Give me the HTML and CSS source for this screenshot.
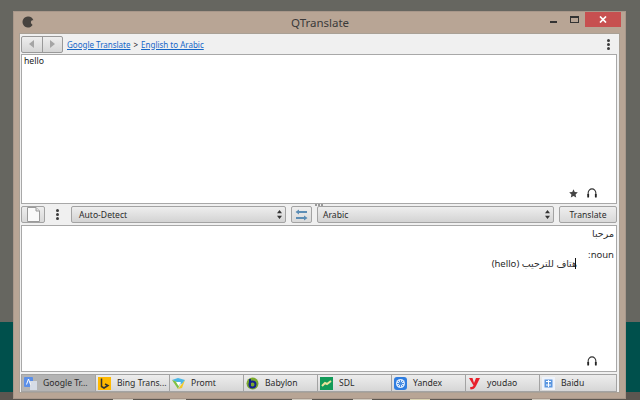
FILE: index.html
```html
<!DOCTYPE html>
<html lang="en">
<head>
<meta charset="utf-8">
<title>QTranslate</title>
<link rel="stylesheet" href="styles.css">
</head>
<body>
<div class="desktop">
  <div class="band-grey"></div>
  <div class="band-teal"></div>
  <div class="band-bottom"><i class="chip c1"></i><i class="chip c2"></i><i class="chip c3"></i><i class="chip c4"></i><i class="chip c5"></i><i class="chip c6"></i></div>
  <div class="window">
    <header class="titlebar">
      <svg class="appicon" width="12" height="12" viewBox="0 0 12 12"><path d="M6 .5a5.5 5.5 0 1 0 4.6 8.5C9.500 8 8.500 7 9 5.500c.4-1 1.300-1.400 2.400-1.200A5.500 5.500 0 0 0 6 .5z" fill="#46423e"/></svg>
      <span class="title">QTranslate</span>
      <div class="winbtns">
        <i class="min"></i>
        <i class="max"></i>
        <span class="close"><svg width="8" height="7" viewBox="0 0 8 7"><path d="M1 .5l6 6M7 .5l-6 6" stroke="#fff" stroke-width="1.700"/></svg></span>
      </div>
    </header>
    <main class="client">
      <div class="toolbar">
        <div class="navgroup">
          <button class="nav"><svg width="6" height="8" viewBox="0 0 6 8"><path d="M5 0v8L0 4z" fill="#a5a5a5"/></svg></button>
          <button class="nav"><svg width="6" height="8" viewBox="0 0 6 8"><path d="M1 0v8l5-4z" fill="#a5a5a5"/></svg></button>
        </div>
        <a class="link">Google Translate</a><span class="sep">&gt;</span><a class="link">English to Arabic</a>
        <span class="dots right"><i></i><i></i><i></i></span>
      </div>
      <section class="box source">
        <p class="src-text">hello</p>
        <div class="box-icons">
          <svg width="9" height="9" viewBox="0 0 10 10"><path d="M5 .2l1.400 3.100 3.400.4-2.500 2.300.7 3.400L5 7.700 2 9.400l.7-3.400L.2 3.700l3.400-.4z" fill="#454545"/></svg>
          <svg class="phones" width="12" height="10" viewBox="0 0 12 11"><path d="M1.800 8V5.200a4.200 4.200 0 0 1 8.400 0V8" fill="none" stroke="#333" stroke-width="1.200"/><rect x=".8" y="6.500" width="2" height="4" rx=".6" fill="#222"/><rect x="9.200" y="6.500" width="2" height="4" rx=".6" fill="#222"/></svg>
        </div>
      </section>
      <div class="splitter"><i></i><i></i><i></i></div>
      <div class="controls">
        <button class="btn doc"><svg width="13" height="15" viewBox="0 0 13 15"><path d="M.5.500h8.500l3.500 3.500v10.500H.500z" fill="#fafafa" stroke="#9a9a9a"/><path d="M9 .5V4h3.500" fill="#e4e4e4" stroke="#9a9a9a"/></svg></button>
        <span class="dots mid"><i></i><i></i><i></i></span>
        <div class="combo from"><span>Auto-Detect</span><svg width="5" height="9" viewBox="0 0 5 9"><path d="M2.500 0L5 3.200H0zM2.500 9L0 5.800h5z" fill="#333"/></svg></div>
        <button class="btn swap"><svg width="13" height="12" viewBox="0 0 13 12"><path d="M4 .5L.5 3 4 5.500V4h8V2H4zM9 6.500L12.500 9 9 11.500V10H1V8h8z" fill="#5c8db5"/></svg></button>
        <div class="combo to"><span>Arabic</span><svg width="5" height="9" viewBox="0 0 5 9"><path d="M2.500 0L5 3.200H0zM2.500 9L0 5.800h5z" fill="#333"/></svg></div>
        <button class="btn translate">Translate</button>
      </div>
      <section class="box result">
        <div class="rtl" dir="rtl">
          <p>مرحبا</p>
          <p class="pos">noun:</p>
          <p class="def"><span class="caret"></span>هتاف للترحيب (hello)</p>
        </div>
        <div class="box-icons">
          <svg class="phones" width="12" height="10" viewBox="0 0 12 11"><path d="M1.800 8V5.200a4.200 4.200 0 0 1 8.400 0V8" fill="none" stroke="#333" stroke-width="1.200"/><rect x=".8" y="6.500" width="2" height="4" rx=".6" fill="#222"/><rect x="9.200" y="6.500" width="2" height="4" rx=".6" fill="#222"/></svg>
        </div>
      </section>
      <nav class="tabs">
        <div class="tab active"><svg width="13" height="13" viewBox="0 0 13 13"><rect width="9" height="10" rx="1" fill="#5b8fe8"/><rect x="6" y="4" width="7" height="9" fill="#d6dce6"/><path d="M2.500 7.500L4.500 2l2 5.500" fill="none" stroke="#fff"/></svg><span>Google Tr...</span></div>
        <div class="tab"><svg width="13" height="13" viewBox="0 0 13 13"><rect width="13" height="13" fill="#ffb900"/><path d="M3.500 1.500v8l2.500 1.500 4-2.500-3-1.500" fill="none" stroke="#333" stroke-width="1.500"/></svg><span>Bing Trans...</span></div>
        <div class="tab"><svg width="13" height="13" viewBox="0 0 13 13"><path d="M0 3l6-2 7 2-3 4z" fill="#49b6e6"/><path d="M0 3l6 9 2-6z" fill="#7fc241"/><path d="M13 3l-7 9 4-1z" fill="#f2c927"/><path d="M4 5h5L6.500 9z" fill="#fff"/></svg><span>Promt</span></div>
        <div class="tab"><svg width="13" height="13" viewBox="0 0 13 13"><circle cx="6.500" cy="6.500" r="6" fill="#7aa82e"/><circle cx="6.500" cy="7.500" r="3" fill="none" stroke="#14238c" stroke-width="2"/><path d="M4 2v7.500" stroke="#14238c" stroke-width="2"/></svg><span>Babylon</span></div>
        <div class="tab"><svg width="13" height="13" viewBox="0 0 13 13"><rect width="13" height="13" fill="#129a58"/><path d="M2 9l3-3 2 1 4-3" fill="none" stroke="#e9e29b" stroke-width="2"/></svg><span>SDL</span></div>
        <div class="tab"><svg width="13" height="13" viewBox="0 0 13 13"><rect width="13" height="13" rx="3" fill="#2f7de0"/><circle cx="6.500" cy="6.500" r="4.500" fill="#dbe9fa"/><path d="M3 6.500h7M6.500 3v7M4 4l5 5M9 4L4 9" stroke="#4a8ee2"/></svg><span>Yandex</span></div>
        <div class="tab"><svg width="13" height="13" viewBox="0 0 13 13"><path d="M1 1h3.500L6 6l2-5h4l-4 8c-1 2.500-3 3.500-5.500 3.500l-.5-2.300c2 0 3-.7 3.500-1.700z" fill="#e8202c"/></svg><span>youdao</span></div>
        <div class="tab"><svg width="13" height="13" viewBox="0 0 13 13"><rect width="13" height="13" fill="#eef3fb"/><rect x="2.500" y="2.500" width="8" height="8" fill="#5a96e0"/><path d="M4 4.500h5M6.500 3v7M4 8h5" stroke="#fff"/></svg><span>Baidu</span></div>
      </nav>
    </main>
  </div>
</div>
</body>
</html>
```

FILE: styles.css
```css
* { box-sizing: border-box; }
html, body { margin: 0; padding: 0; }
body { width: 640px; height: 400px; overflow: hidden; font-family: "Noto Sans", "DejaVu Sans", sans-serif; font-size: 8.600px; color: #333; }
p { margin: 0; }
button { font: inherit; color: inherit; padding: 0; margin: 0; }

.desktop { position: relative; width: 640px; height: 400px; display: flex; flex-direction: column; }
.band-grey { height: 322px; background: #666660; }
.band-teal { height: 70px; background: #00504c; }
.band-bottom { height: 8px; background: #5b5650; position: relative; }
.chip { position: absolute; top: 5px; height: 3px; background: #cfcabf; }
.c1 { left: 113px; width: 20px; }
.c2 { left: 170px; width: 16px; }
.c3 { left: 292px; width: 20px; }
.c4 { left: 353px; width: 19px; }
.c5 { left: 410px; width: 20px; background: #d8d2b0; }
.c6 { left: 532px; width: 18px; }

.window { position: absolute; left: 13px; top: 11px; width: 613px; height: 388px; background: #b8a595; border: 1px solid #a8978a; display: flex; flex-direction: column; padding: 0 5px 5px; }
.titlebar { height: 21px; flex: none; display: flex; align-items: center; position: relative; padding-left: 2px; }
.appicon { margin-top: -1px; margin-left: 1px; }
.title { position: absolute; left: 272px; top: 3px; font-size: 11.500px; color: #3a3a3a; }
.winbtns { position: absolute; right: -1px; top: 0; width: 76px; height: 15px; }
.min { position: absolute; left: 5px; top: 9px; width: 7px; height: 2px; background: #333; }
.max { position: absolute; left: 25px; top: 4px; width: 9px; height: 7px; border: 1px solid #333; border-top-width: 2px; }
.close { position: absolute; right: 0; top: 0; width: 36px; height: 15px; background: #c75050; display: flex; align-items: center; justify-content: center; }

.client { flex: 1; background: #f0f0f0; border: 1px solid #a9a095; display: flex; flex-direction: column; padding: 0 2px 0 1px; position: relative; }
.toolbar { height: 20px; flex: none; display: flex; align-items: center; }
.navgroup { display: flex; width: 42px; height: 17px; margin-right: 4px; border: 1px solid #999; border-radius: 2px; background: linear-gradient(#eee, #d5d5d5); }
.nav { flex: 1; border: 0; background: none; display: flex; align-items: center; justify-content: center; }
.nav + .nav { border-left: 1px solid #999; }
.link { color: #1566c8; text-decoration: underline; font-size: 8px; }
.sep { margin: 0 3px; color: #222; font-size: 8px; }
.dots { display: flex; flex-direction: column; gap: 1px; width: 3px; }
.dots i { width: 3px; height: 3px; border-radius: 50%; background: #3c3c3c; }
.right { margin-left: auto; margin-right: 7px; }

.box { background: #fff; border: 1px solid #a8a8a8; position: relative; }
.source { height: 150px; flex: none; padding: 0 2px; }
.src-text { font-size: 8.700px; color: #222; }
.box-icons { position: absolute; right: 18px; bottom: 5px; display: flex; align-items: center; gap: 8px; }
.splitter { position: absolute; left: 295px; top: 170px; display: flex; gap: 1px; }
.splitter i { width: 2px; height: 2px; background: #999; }
.controls { height: 21px; flex: none; display: flex; align-items: center; }
.btn { height: 17px; border: 1px solid #a3a3a3; border-radius: 2px; background: linear-gradient(#eee, #d9d9d9); display: flex; align-items: center; justify-content: center; }
.doc { width: 24px; }
.mid { margin: 0 12px 0 11px; }
.combo { height: 17px; border: 1px solid #a3a3a3; border-radius: 2px; background: linear-gradient(#eee, #d3d3d3); display: flex; align-items: center; justify-content: space-between; padding: 0 3px 0 7px; color: #2b2b2b; }
.from { width: 215px; }
.swap { width: 21px; margin: 0 5px; }
.to { width: 237px; padding-left: 5px; }
.translate { width: 58px; margin-left: 5px; color: #2b2b2b; }
.result { flex: 1; }
.rtl { padding: 2px 2px 0 0; line-height: 12px; text-align: right; color: #2b2b2b; font-size: 9.500px; }
.pos { margin-top: 9px; }
.def { margin-top: -3px; padding-right: 37px; position: relative; }
.caret { position: absolute; right: 38px; top: 0; width: 1px; height: 11px; background: #111; }
.tabs { height: 18px; flex: none; margin: 2px 0 0; display: grid; grid-template-columns: repeat(7, 74px) minmax(0, 1fr); border: 1px solid #a3a3a3; }
.tab { display: flex; align-items: center; gap: 6px; padding-left: 2px; background: linear-gradient(#ededed, #d6d6d6); border-right: 1px solid #a3a3a3; color: #2b2b2b; white-space: nowrap; overflow: hidden; }
.tab:last-child { border-right: 0; }
.tab.active { background: #b4b4b4; }
.tab svg { flex: none; }
```
